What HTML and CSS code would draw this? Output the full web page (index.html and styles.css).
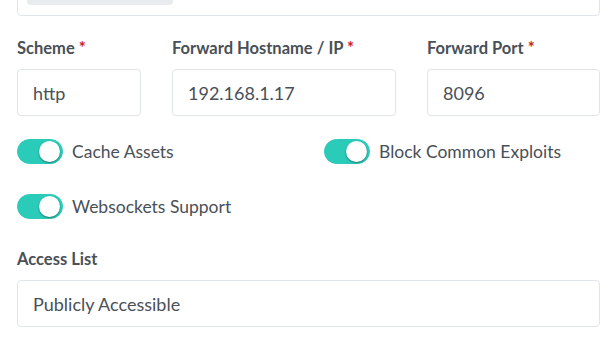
FILE: index.html
```html
<!DOCTYPE html>
<html lang="en">

<head>
    <meta charset="UTF-8">
    <meta name="viewport" content="width=device-width, initial-scale=1.0">
    <title>Edit Proxy Host</title>
    <link rel="stylesheet" href="styles.css">
</head>

<body>
    <div class="container">
        <!-- domain names field, scrolled mostly out of view -->
        <div class="tag-input">
            <span class="tag"></span>
        </div>

        <div class="row-3">
            <div class="form-group">
                <label class="form-label">Scheme <span class="required">*</span></label>
                <input type="text" class="form-input" value="http">
            </div>
            <div class="form-group">
                <label class="form-label">Forward Hostname / IP <span class="required">*</span></label>
                <input type="text" class="form-input" value="192.168.1.17">
            </div>
            <div class="form-group">
                <label class="form-label">Forward Port <span class="required">*</span></label>
                <input type="text" class="form-input" value="8096">
            </div>
        </div>

        <div class="row-2">
            <label class="switch">
                <input type="checkbox" class="switch-input" checked>
                <span class="switch-indicator"></span>
                <span class="switch-text">Cache Assets</span>
            </label>
            <label class="switch">
                <input type="checkbox" class="switch-input" checked>
                <span class="switch-indicator"></span>
                <span class="switch-text">Block Common Exploits</span>
            </label>
            <label class="switch">
                <input type="checkbox" class="switch-input" checked>
                <span class="switch-indicator"></span>
                <span class="switch-text">Websockets Support</span>
            </label>
        </div>

        <div class="form-group access">
            <label class="form-label">Access List</label>
            <input type="text" class="form-input" value="Publicly Accessible">
        </div>
    </div>
</body>

</html>
```

FILE: styles.css
```css
* {
    margin: 0;
    padding: 0;
    box-sizing: border-box;
}

body {
    font-family: Lato, 'Noto Sans', sans-serif;
    color: #495057;
    background-color: #ffffff;
    overflow: hidden;
}

.container {
    width: 583px;
    margin-left: 17px;
}

.tag-input {
    height: 47px;
    margin-top: -31px;
    margin-bottom: 20px;
    padding: 5px 9px 0;
    border: 1px solid #e0e5ec;
    border-radius: 4px;
}

.tag {
    display: block;
    width: 146px;
    height: 30px;
    background-color: #e9ecef;
    border-radius: 4px;
}

.row-3 {
    display: grid;
    grid-template-columns: 124px 224px 1fr;
    column-gap: 31px;
}

.form-group {
    margin-bottom: 20px;
}

.form-label {
    display: block;
    height: 25px;
    line-height: 25px;
    margin-bottom: 8px;
    font-size: 16.5px;
    font-weight: 700;
    color: #495057;
}

.required {
    color: #cd201f;
}

.form-input {
    display: block;
    width: 100%;
    height: 47px;
    padding: 0 15px;
    border: 1px solid #e0e5ec;
    border-radius: 4px;
    font-family: inherit;
    font-size: 18px;
    color: #495057;
    background-color: #ffffff;
    outline: none;
}

.row-2 {
    display: grid;
    grid-template-columns: 307px 1fr;
    row-gap: 25px;
    margin-bottom: 26px;
}

.switch {
    display: flex;
    align-items: center;
    height: 30px;
    cursor: pointer;
}

.switch-input {
    display: none;
}

.switch-indicator {
    position: relative;
    flex: none;
    width: 46px;
    height: 25px;
    border-radius: 50px;
    background-color: #e9ecef;
    border: 1px solid #e0e5ec;
    transition: background-color 0.3s ease;
}

.switch-indicator::before {
    content: '';
    position: absolute;
    top: 1px;
    left: 1px;
    width: 21px;
    height: 21px;
    border-radius: 50%;
    background-color: #ffffff;
    box-shadow: 0 1px 2px 0 rgba(0, 0, 0, 0.4);
    transition: left 0.3s ease;
}

.switch-input:checked + .switch-indicator {
    background-color: #2bcbba;
    border-color: #2bcbba;
}

.switch-input:checked + .switch-indicator::before {
    left: 21px;
}

.switch-text {
    margin-left: 9px;
    font-size: 17.5px;
    color: #495057;
}

.access {
    margin-bottom: 0;
}
```
